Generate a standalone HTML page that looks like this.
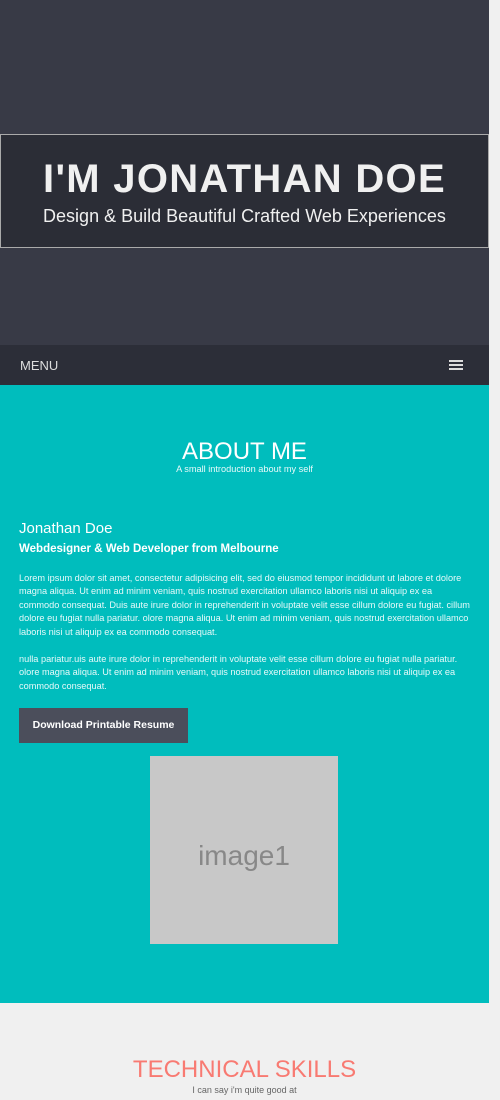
<!DOCTYPE html>
<html><head><meta charset="utf-8"><style>
*{margin:0;padding:0;box-sizing:border-box}
body{width:500px;height:1100px;overflow:hidden;background:#f0f0f0;font-family:"Liberation Sans",Arial,sans-serif;position:relative}
.wrap{position:absolute;left:0;top:0;width:489px}
.hero{height:345px;background:#383a46;position:relative}
.box{position:absolute;left:0;top:134px;width:489px;height:114px;background:#2b2d36;border:1px solid #aaa;text-align:center;color:#f0f0f0}
.box h1{font-size:40px;font-weight:bold;margin-top:21px;letter-spacing:1.3px;line-height:46px}
.box p{font-size:18px;margin-top:4px}
.nav{height:40px;background:#2c2e38;position:relative;color:#ddd;font-size:13px}
.nav span{position:absolute;left:20px;top:13px}
.ham{position:absolute;right:26px;top:15px;width:14px}
.ham i{display:block;height:2px;background:#ddd;margin-bottom:2px}
.about{height:618px;background:#00bdbd;color:#fff;position:relative}
.about h2{position:absolute;top:53px;width:100%;text-align:center;font-weight:normal;font-size:24px}
.c{position:absolute;left:19px;right:14px}
p.t{font-size:9.2px;line-height:13.4px;color:#e6fafa}
.btn{position:absolute;left:19px;top:323px;width:169px;height:35px;background:#4b4e5b;color:#fff;font-weight:bold;font-size:10.5px;line-height:35px;text-align:center}
.img{position:absolute;left:150px;top:371px;width:188px;height:188px;background:#c8c8c8;color:#888;font-size:28px;text-align:center;line-height:200px}
.tech{position:absolute;top:1056px;width:489px;text-align:center}
</style></head><body>
<div class="wrap">
<div class="hero"><div class="box"><h1>I'M JONATHAN DOE</h1><p>Design &amp; Build Beautiful Crafted Web Experiences</p></div></div>
<div class="nav"><span>MENU</span><div class="ham"><i></i><i></i><i></i></div></div>
<div class="about">
<h2>ABOUT ME</h2>
<div style="position:absolute;top:79px;width:100%;text-align:center;font-size:9.2px;color:#e6fafa">A small introduction about my self</div>
<div class="c" style="top:135px;font-size:15px">Jonathan Doe</div>
<div class="c" style="top:158px;font-size:11.5px;font-weight:bold">Webdesigner &amp; Web Developer from Melbourne</div>
<p class="c t" style="top:187px">Lorem ipsum dolor sit amet, consectetur adipisicing elit, sed do eiusmod tempor incididunt ut labore et dolore magna aliqua. Ut enim ad minim veniam, quis nostrud exercitation ullamco laboris nisi ut aliquip ex ea commodo consequat. Duis aute irure dolor in reprehenderit in voluptate velit esse cillum dolore eu fugiat. cillum dolore eu fugiat nulla pariatur. olore magna aliqua. Ut enim ad minim veniam, quis nostrud exercitation ullamco laboris nisi ut aliquip ex ea commodo consequat.</p>
<p class="c t" style="top:268px">nulla pariatur.uis aute irure dolor in reprehenderit in voluptate velit esse cillum dolore eu fugiat nulla pariatur. olore magna aliqua. Ut enim ad minim veniam, quis nostrud exercitation ullamco laboris nisi ut aliquip ex ea commodo consequat.</p>
<div class="btn">Download Printable Resume</div>
<div class="img">image1</div>
</div>
</div>
<div class="tech"><div style="color:#f87a72;font-size:24px;line-height:28px">TECHNICAL SKILLS</div><div style="color:#666;font-size:9px;margin-top:1px">I can say i'm quite good at</div></div>
</body></html>
